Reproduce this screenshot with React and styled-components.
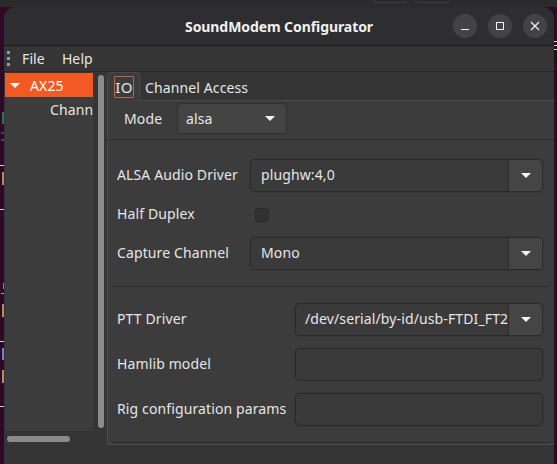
import React from "react";
import styled, { createGlobalStyle } from "styled-components";

const GlobalStyle = createGlobalStyle`
  html, body {
    margin: 0;
    padding: 0;
    background: #300a24;
    overflow: hidden;
  }
  * {
    box-sizing: border-box;
  }
`;

const Desktop = styled.div`
  width: 557px;
  height: 464px;
  display: grid;
  grid-template-columns: 4px 550px 3px;
  grid-template-rows: 7px 457px;
  background: #300a24;
  font-family: "Noto Sans", "Open Sans", sans-serif;
  font-size: 14px;
  letter-spacing: 0.12px;
  color: #e6e6e6;
`;

const TopStrip = styled.div`
  grid-column: 1 / 4;
  background: #2b2b2b;
  display: flex;
  gap: 8px;
  padding-left: 373px;
`;

const OtherWindowEdge = styled.div`
  width: 34px;
  height: 3px;
  border: 1px solid #3d3d3d;
  border-top: 0;
  border-radius: 0 0 5px 5px;
`;

const BehindStrip = styled.div`
  display: flex;
  flex-direction: column;
  align-items: ${(p) => (p.$side === "right" ? "flex-start" : "flex-end")};
  overflow: hidden;
`;

const Fragment = styled.div`
  flex: none;
  margin-top: ${(p) => p.$gap}px;
  height: ${(p) => p.$h}px;
  width: ${(p) => p.$w || 4}px;
  background: ${(p) => p.$color};
`;

const Window = styled.div`
  display: flex;
  flex-direction: column;
  border-radius: 12px 12px 0 0;
  overflow: hidden;
  background: #353535;
`;

const TitleBar = styled.header`
  flex: none;
  height: 39px;
  display: grid;
  grid-template-columns: 1fr auto 1fr;
  align-items: center;
  background: #2e2e30;
  border-bottom: 1px solid #1d1d1d;
`;

const Title = styled.div`
  grid-column: 2;
  font-weight: 700;
  font-size: 14px;
  letter-spacing: -0.08px;
  color: #f0f0f0;
`;

const WindowButtons = styled.div`
  justify-self: end;
  display: flex;
  gap: 11px;
  padding-right: 7px;
`;

const WindowButton = styled.div`
  width: 24px;
  height: 24px;
  border-radius: 50%;
  background: #434345;
  display: flex;
  align-items: center;
  justify-content: center;
`;

const MenuBar = styled.nav`
  flex: none;
  height: 26px;
  display: flex;
  align-items: center;
  background: #353535;
  border-bottom: 1px solid #2a2a2a;
  padding-left: 3px;
`;

const Grip = styled.div`
  width: 3px;
  display: flex;
  flex-direction: column;
  gap: 3px;
  margin-right: 12px;
  i {
    display: block;
    width: 3px;
    height: 3px;
    background: #9a9a9a;
  }
`;

const MenuItem = styled.span`
  margin-right: 17px;
`;

const Body = styled.div`
  flex: 1;
  display: flex;
  min-height: 0;
`;

const Sidebar = styled.aside`
  flex: none;
  width: 103px;
  padding: 1px 0 0 1px;
  display: flex;
  flex-direction: column;
`;

const SidebarTop = styled.div`
  display: flex;
  height: 358px;
`;

const Tree = styled.div`
  width: 88px;
  background: #3c3c3c;
  overflow: hidden;
`;

const TreeRow = styled.div`
  height: 24px;
  display: flex;
  align-items: center;
  white-space: nowrap;
  padding-left: ${(p) => p.$indent}px;
  background: ${(p) => (p.$selected ? "#f15a22" : "transparent")};
  color: ${(p) => (p.$selected ? "#ffffff" : "#e6e6e6")};
`;

const Expander = styled.span`
  width: 0;
  height: 0;
  margin-right: 10px;
  border-left: 5px solid transparent;
  border-right: 5px solid transparent;
  border-top: 5px solid #ffffff;
`;

const VScroll = styled.div`
  width: 6px;
  height: 353px;
  margin: 2px 0 0 5px;
  border-radius: 3px;
  background: #8b8b8b;
`;

const HScroll = styled.div`
  width: 63px;
  height: 6px;
  margin: 5px 0 0 2px;
  border-radius: 3px;
  background: #8b8b8b;
`;

const Notebook = styled.section`
  flex: 1;
  display: flex;
  flex-direction: column;
  min-width: 0;
`;

const TabStrip = styled.div`
  flex: none;
  height: 28px;
  display: flex;
  align-items: flex-start;
`;

const ActiveTab = styled.div`
  position: relative;
  z-index: 1;
  width: 33px;
  height: 29px;
  background: #3c3c3c;
  border: 1px solid #4a4a4a;
  border-bottom: 0;
  border-radius: 4px 4px 0 0;
  padding: 3px 0 0 6px;
`;

const FocusLabel = styled.div`
  width: 20px;
  height: 22px;
  border: 1px solid #b5674a;
  border-radius: 1px;
  display: flex;
  align-items: center;
  justify-content: center;
  font-size: 15px;
  letter-spacing: 0.4px;
`;

const Tab = styled.div`
  height: 28px;
  display: flex;
  align-items: center;
  padding: 2px 0 0 5px;
`;

const Page = styled.div`
  height: 345px;
  background: #3c3c3c;
  border: 1px solid #4a4a4a;
  border-right: 0;
`;

const ModeRow = styled.div`
  height: 38px;
  display: flex;
  align-items: flex-start;
  padding: 2px 0 0 16px;
`;

const ModeLabel = styled.span`
  width: 53px;
  line-height: 32px;
`;

const ModeButton = styled.div`
  width: 110px;
  height: 31px;
  display: flex;
  align-items: center;
  justify-content: space-between;
  padding: 0 11px 0 8px;
  background: #444444;
  border: 1px solid #2e2e2e;
  border-radius: 5px;
`;

const Separator = styled.div`
  height: 1px;
  margin: 0 ${(p) => p.$right || 0}px 0 ${(p) => p.$left || 0}px;
  background: #2e2e2e;
`;

const FormGrid = styled.div`
  display: grid;
  grid-template-columns: ${(p) => p.$labelWidth}px 1fr;
  grid-template-rows: ${(p) => p.$rows};
  row-gap: ${(p) => p.$rowGap}px;
  align-items: center;
  padding: ${(p) => p.$top}px 11px ${(p) => p.$bottom}px 9px;
`;

const Label = styled.label`
  white-space: nowrap;
  padding-bottom: 2px;
`;

const Check = styled.div`
  width: 14px;
  height: 14px;
  margin-left: 5px;
  background: #313131;
  border: 1px solid #2b2b2b;
  border-radius: 3px;
`;

const Combo = styled.div`
  height: 33px;
  display: flex;
  border: 1px solid #2a2a2a;
  border-radius: 5px;
  box-shadow: 0 0 0 1px #383838;
  overflow: hidden;
`;

const ComboValue = styled.div`
  flex: 1;
  min-width: 0;
  display: flex;
  align-items: center;
  padding-left: ${(p) => p.$pad}px;
  padding-bottom: 2px;
  white-space: nowrap;
  overflow: hidden;
  background: #3a3a3a;
`;

const ComboButton = styled.div`
  flex: none;
  width: 34px;
  display: flex;
  align-items: center;
  justify-content: center;
  background: #454545;
  border-left: 1px solid #2a2a2a;
`;

const Arrow = styled.span`
  width: 0;
  height: 0;
  border-left: 5px solid transparent;
  border-right: 5px solid transparent;
  border-top: 5px solid #f4f4f4;
`;

const TextEntry = styled.div`
  height: 33px;
  background: #3a3a3a;
  border: 1px solid #2a2a2a;
  border-radius: 5px;
  box-shadow: 0 0 0 1px #383838;
`;

const leftFragments = [
  { gap: 105, h: 12, color: "#1f7a5a", w: 2 },
  { gap: 8, h: 2, color: "#3b3f8a", w: 3 },
  { gap: 5, h: 2, color: "#3b3f8a", w: 3 },
  { gap: 24, h: 1, color: "#d8d0d6" },
  { gap: 6, h: 13, color: "#b98a68", w: 2 },
  { gap: 24, h: 1, color: "#d8d0d6" },
  { gap: 73, h: 6, color: "#5b8fd0", w: 1 },
  { gap: 4, h: 1, color: "#a59aa2", w: 3 },
  { gap: 10, h: 13, color: "#b98a68", w: 2 },
  { gap: 24, h: 1, color: "#d8d0d6" },
  { gap: 6, h: 12, color: "#6a86c8", w: 2 },
  { gap: 10, h: 13, color: "#b98a68", w: 2 },
  { gap: 23, h: 1, color: "#d8d0d6" },
];

const rightFragments = [
  { gap: 34, h: 1, color: "#d8d0d6" },
  { gap: 3, h: 1, color: "#d8d0d6" },
  { gap: 3, h: 1, color: "#d8d0d6" },
];

function Strip({ items, side }) {
  return (
    <BehindStrip $side={side}>
      {items.map((f, i) => (
        <Fragment key={i} $gap={f.gap} $h={f.h} $w={f.w} $color={f.color} />
      ))}
    </BehindStrip>
  );
}

function Dropdown({ value, pad = 10 }) {
  return (
    <Combo>
      <ComboValue $pad={pad}>{value}</ComboValue>
      <ComboButton>
        <Arrow />
      </ComboButton>
    </Combo>
  );
}

export default function App() {
  return (
    <Desktop>
      <GlobalStyle />
      <TopStrip>
        <OtherWindowEdge />
        <OtherWindowEdge />
      </TopStrip>
      <Strip items={leftFragments} side="left" />
      <Window>
        <TitleBar>
          <Title>SoundModem Configurator</Title>
          <WindowButtons>
            <WindowButton>
              <svg width="10" height="10" viewBox="0 0 10 10">
                <path d="M1 8.5h8" stroke="#f2f2f2" strokeWidth="1" fill="none" />
              </svg>
            </WindowButton>
            <WindowButton>
              <svg width="10" height="10" viewBox="0 0 10 10">
                <rect x="1.5" y="1.5" width="7" height="7" stroke="#f2f2f2" strokeWidth="1" fill="none" />
              </svg>
            </WindowButton>
            <WindowButton>
              <svg width="10" height="10" viewBox="0 0 10 10">
                <path d="M1 1l8 8M9 1l-8 8" stroke="#f2f2f2" strokeWidth="1.2" fill="none" />
              </svg>
            </WindowButton>
          </WindowButtons>
        </TitleBar>
        <MenuBar>
          <Grip>
            <i />
            <i />
            <i />
          </Grip>
          <MenuItem>File</MenuItem>
          <MenuItem>Help</MenuItem>
        </MenuBar>
        <Body>
          <Sidebar>
            <SidebarTop>
              <Tree>
                <TreeRow $selected $indent={5}>
                  <Expander />
                  AX25
                </TreeRow>
                <TreeRow $indent={45}>Channel</TreeRow>
              </Tree>
              <VScroll />
            </SidebarTop>
            <HScroll />
          </Sidebar>
          <Notebook>
            <TabStrip>
              <ActiveTab>
                <FocusLabel>IO</FocusLabel>
              </ActiveTab>
              <Tab>Channel Access</Tab>
            </TabStrip>
            <Page>
              <ModeRow>
                <ModeLabel>Mode</ModeLabel>
                <ModeButton>
                  alsa
                  <Arrow />
                </ModeButton>
              </ModeRow>
              <Separator />
              <FormGrid $labelWidth={133} $rows="33px 45px 33px" $rowGap={0} $top={19} $bottom={16}>
                <Label>ALSA Audio Driver</Label>
                <Dropdown value="plughw:4,0" />
                <Label>Half Duplex</Label>
                <Check />
                <Label>Capture Channel</Label>
                <Dropdown value="Mono" />
              </FormGrid>
              <Separator $left={4} $right={5} />
              <FormGrid $labelWidth={178} $rows="33px 33px 33px" $rowGap={12} $top={16} $bottom={16}>
                <Label>PTT Driver</Label>
                <Dropdown value="/dev/serial/by-id/usb-FTDI_FT2" pad={9} />
                <Label>Hamlib model</Label>
                <TextEntry />
                <Label>Rig configuration params</Label>
                <TextEntry />
              </FormGrid>
              <Separator $left={4} $right={5} />
            </Page>
          </Notebook>
        </Body>
      </Window>
      <Strip items={rightFragments} side="right" />
    </Desktop>
  );
}
